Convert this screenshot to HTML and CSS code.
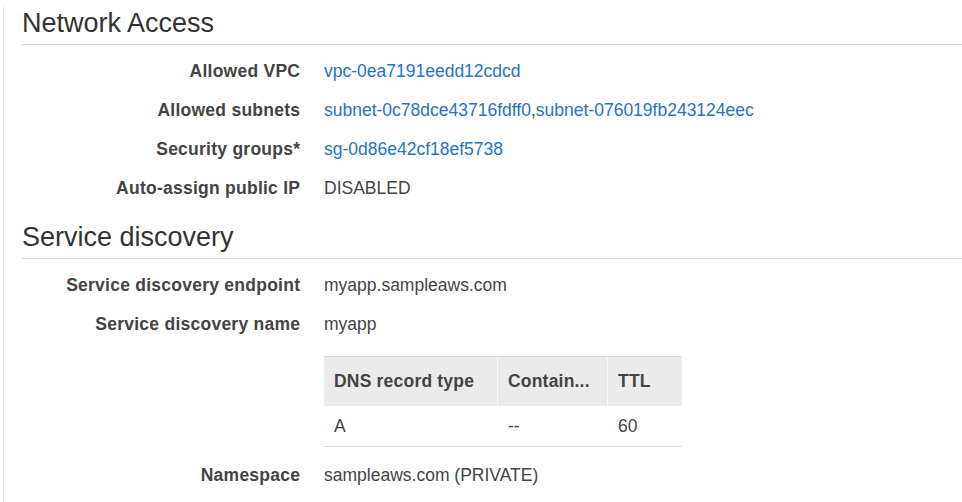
FILE: index.html
```html
<!DOCTYPE html>
<html>
<head>
<meta charset="utf-8">
<link rel="stylesheet" href="styles.css">
</head>
<body>
<div class="page">
  <section class="section">
    <h2 class="section-title">Network Access</h2>
    <div class="props">
      <div class="label">Allowed VPC</div>
      <div class="value"><a class="link" href="#">vpc-0ea7191eedd12cdcd</a></div>
      <div class="label">Allowed subnets</div>
      <div class="value"><a class="link" href="#">subnet-0c78dce43716fdff0</a>,<a class="link" href="#">subnet-076019fb243124eec</a></div>
      <div class="label">Security groups*</div>
      <div class="value"><a class="link" href="#">sg-0d86e42cf18ef5738</a></div>
      <div class="label">Auto-assign public IP</div>
      <div class="value">DISABLED</div>
    </div>
  </section>
  <section class="section section-second">
    <h2 class="section-title">Service discovery</h2>
    <div class="props">
      <div class="label">Service discovery endpoint</div>
      <div class="value">myapp.sampleaws.com</div>
      <div class="label">Service discovery name</div>
      <div class="value">myapp</div>
      <div class="label"></div>
      <div class="value value-table">
        <table class="dns">
          <thead>
            <tr><th class="c1">DNS record type</th><th class="c2">Contain...</th><th class="c3">TTL</th></tr>
          </thead>
          <tbody>
            <tr><td class="c1">A</td><td class="c2">--</td><td class="c3">60</td></tr>
          </tbody>
        </table>
      </div>
      <div class="label">Namespace</div>
      <div class="value">sampleaws.com (PRIVATE)</div>
    </div>
  </section>
</div>
</body>
</html>
```

FILE: styles.css
```css
html, body {
  margin: 0;
  padding: 0;
  background: #ffffff;
}
body {
  font-family: "Liberation Sans", Arial, sans-serif;
  color: #444444;
  padding-top: 7px;
}
.page {
  margin-left: 3px;
  border-left: 1px solid #e3e3e3;
  padding-left: 18px;
  min-height: 495px;
}
.section-title {
  margin: 0;
  font-size: 27px;
  line-height: 32px;
  font-weight: normal;
  color: #333333;
  padding-bottom: 5px;
  border-bottom: 1px solid #d5d5d5;
}
.section-second {
  margin-top: 13px;
}
.props {
  display: grid;
  grid-template-columns: 278px 1fr;
  column-gap: 24px;
  padding-top: 7px;
  font-size: 17.5px;
  line-height: 39px;
}
.label {
  text-align: right;
  font-weight: bold;
  color: #444444;
  white-space: nowrap;
  letter-spacing: 0.25px;
  margin-right: -0.25px;
}
.value {
  color: #444444;
  white-space: nowrap;
}
.link {
  color: #2574c4;
  text-decoration: none;
}
.value-table {
  padding-top: 12px;
  padding-bottom: 9px;
  line-height: normal;
}
.dns {
  border-collapse: collapse;
  font-size: 17.5px;
  color: #444444;
}
.dns th {
  height: 49px;
  background: #ebebeb;
  border-top: 1px solid #dcdcdc;
  text-align: left;
  font-weight: bold;
  padding: 0 10px;
  vertical-align: middle;
  white-space: nowrap;
  letter-spacing: 0.2px;
}
.dns th + th {
  border-left: 1px solid #fafafa;
}
.dns td {
  height: 40px;
  padding: 0 10px;
  text-align: left;
  vertical-align: middle;
  border-bottom: 1px solid #dcdcdc;
}
.dns td + td {
  border-left: 1px solid transparent;
}
.c1 { width: 153px; }
.c2 { width: 89px; }
.c3 { width: 54px; }
```
